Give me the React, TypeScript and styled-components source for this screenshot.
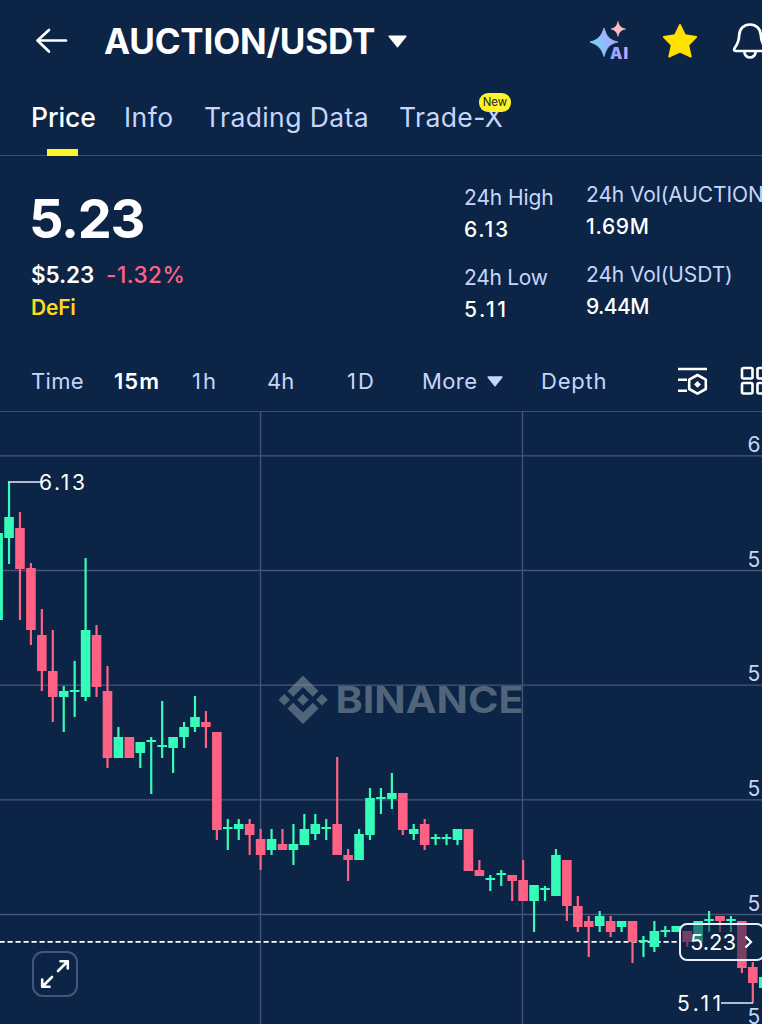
import React from 'react';
import styled, { createGlobalStyle } from 'styled-components';

type Candle = [up: 0 | 1, high: number, top: number, bottom: number, low: number];

const UP = '#35fdb9';
const DOWN = '#ff6184';
const MUTED = '#c6d6fb';

const STEP = 10.938;
const FIRST_X = -1.9;

const candles: Candle[] = [
  [1, 533, 533, 620, 620],
  [1, 482, 517, 538, 564],
  [0, 512, 528, 569, 620],
  [0, 563, 568, 630, 645],
  [0, 609, 635, 671, 691],
  [0, 630, 671, 697, 722],
  [1, 686, 691, 697, 732],
  [1, 661, 690, 692, 717],
  [1, 558, 630, 697, 701],
  [0, 625, 635, 687, 697],
  [0, 666, 691, 758, 768],
  [1, 727, 737, 758, 758],
  [0, 737, 737, 758, 758],
  [1, 742, 742, 753, 768],
  [1, 737, 740, 742, 794],
  [1, 701, 745, 747, 758],
  [1, 737, 737, 748, 773],
  [1, 722, 727, 737, 748],
  [1, 696, 717, 727, 732],
  [0, 711, 722, 727, 748],
  [0, 732, 732, 830, 840],
  [1, 819, 827, 829, 850],
  [1, 819, 824, 829, 840],
  [0, 819, 824, 835, 855],
  [0, 829, 839, 855, 870],
  [1, 829, 839, 850, 855],
  [0, 829, 844, 850, 850],
  [1, 824, 844, 850, 865],
  [1, 814, 829, 845, 845],
  [1, 814, 824, 834, 840],
  [1, 819, 827, 829, 840],
  [0, 757, 824, 855, 855],
  [0, 849, 855, 860, 881],
  [1, 829, 834, 860, 860],
  [1, 788, 798, 835, 840],
  [1, 788, 797, 799, 814],
  [1, 773, 793, 799, 809],
  [0, 793, 793, 830, 835],
  [1, 824, 829, 834, 840],
  [0, 819, 824, 845, 850],
  [1, 834, 837, 839, 845],
  [1, 834, 837, 839, 845],
  [1, 829, 829, 840, 845],
  [0, 829, 829, 871, 871],
  [0, 860, 870, 876, 876],
  [1, 875, 878, 880, 891],
  [1, 870, 873, 875, 886],
  [0, 875, 875, 881, 901],
  [0, 860, 880, 901, 901],
  [1, 885, 885, 901, 932],
  [1, 886, 888, 890, 901],
  [1, 849, 855, 896, 896],
  [0, 860, 860, 906, 921],
  [0, 896, 906, 927, 932],
  [0, 916, 921, 927, 957],
  [1, 911, 916, 926, 932],
  [0, 916, 921, 932, 937],
  [1, 921, 921, 927, 932],
  [0, 921, 921, 942, 963],
  [1, 936, 940, 942, 957],
  [1, 921, 931, 947, 952],
  [1, 926, 930, 932, 937],
  [1, 926, 926, 932, 932],
  [0, 931, 931, 942, 947],
  [1, 921, 921, 942, 942],
  [1, 911, 919, 921, 932],
  [0, 916, 916, 921, 932],
  [1, 916, 919, 921, 932],
  [0, 921, 921, 968, 973],
  [0, 962, 967, 983, 1003],
  [1, 977, 977, 988, 988],
];

const gridRows = [455.8, 570.5, 685.2, 799.8, 914.5];
const gridCols = [260.5, 522.5];

const GlobalStyle = createGlobalStyle`
  html, body {
    margin: 0;
    background: #0c2546;
    overflow: hidden;
  }
  * { box-sizing: border-box; }
`;

const Screen = styled.div`
  display: flex;
  flex-direction: column;
  width: 762px;
  height: 1024px;
  overflow: hidden;
  background: #0c2546;
  color: #fff;
  font-family: Inter, "Liberation Sans", sans-serif;
  white-space: nowrap;
`;

const Header = styled.header`
  display: flex;
  align-items: center;
  height: 82px;
  padding-left: 35px;
  flex: none;
  svg { display: block; flex: none; }
`;

const Pair = styled.h1`
  margin: 0 13px 0 36px;
  width: 271px;
  flex: none;
  font-size: 35px;
  font-weight: 700;
  letter-spacing: -0.2px;
`;

const Actions = styled.div`
  display: flex;
  align-items: center;
  flex: none;
  margin-left: 182px;
  gap: 34px;
`;

const Tabs = styled.nav`
  display: flex;
  height: 74px;
  padding-left: 31px;
  border-bottom: 1px solid #3c4f70;
  flex: none;
`;

const Tab = styled.div<{ $w: number; $ls: number; $active?: boolean }>`
  position: relative;
  width: ${p => p.$w}px;
  flex: none;
  padding-top: 19px;
  font-size: 26.5px;
  line-height: 32px;
  font-weight: ${p => (p.$active ? 500 : 400)};
  letter-spacing: ${p => p.$ls}px;
  color: ${p => (p.$active ? '#fff' : MUTED)};
`;

const Underline = styled.div`
  position: absolute;
  left: 16px;
  bottom: -1px;
  width: 31px;
  height: 7px;
  background: #fdf52a;
`;

const Badge = styled.span`
  position: absolute;
  left: 80px;
  top: 11px;
  width: 32px;
  height: 19px;
  border-radius: 9px;
  background: #fdf52a;
  color: #1b1f2b;
  font-size: 11.5px;
  line-height: 19px;
  letter-spacing: 0;
  text-align: center;
`;

const Summary = styled.section`
  display: flex;
  height: 195px;
  padding-left: 31px;
  flex: none;
`;

const Quote = styled.div`
  width: 433px;
  flex: none;
  padding-top: 30px;
`;

const LastPrice = styled.div`
  margin-left: -2px;
  font-size: 54px;
  line-height: 66px;
  font-weight: 700;
  letter-spacing: -1.3px;
`;

const Change = styled.div`
  display: flex;
  margin-top: 9px;
  font-size: 22.5px;
  line-height: 28px;
  font-weight: 600;
`;

const Fiat = styled.span`
  width: 75px;
  letter-spacing: -0.1px;
`;

const Percent = styled.span`
  color: ${DOWN};
  font-weight: 500;
  letter-spacing: 0.5px;
`;

const Category = styled.div`
  margin-top: 5px;
  font-size: 21px;
  line-height: 28px;
  font-weight: 600;
  letter-spacing: -0.2px;
  color: #ffd91c;
`;

const StatColumn = styled.div<{ $w: number; $top: number }>`
  width: ${p => p.$w}px;
  flex: none;
  padding-top: ${p => p.$top}px;
`;

const Stat = styled.div`
  height: 80px;
  font-size: 21px;
`;

const StatLabel = styled.div<{ $ls?: number }>`
  line-height: 32px;
  color: ${MUTED};
  letter-spacing: ${p => p.$ls ?? 0}px;
`;

const StatValue = styled.div<{ $ls: number }>`
  line-height: 32px;
  font-weight: 500;
  letter-spacing: ${p => p.$ls}px;
`;

const Intervals = styled.div`
  display: flex;
  align-items: center;
  height: 61px;
  padding-left: 31px;
  border-bottom: 1px solid #3c4f70;
  flex: none;
  svg { display: block; flex: none; }
`;

const Interval = styled.div<{ $w: number; $ls?: number; $active?: boolean }>`
  display: flex;
  align-items: center;
  width: ${p => p.$w}px;
  flex: none;
  gap: 10px;
  font-size: 22px;
  font-weight: ${p => (p.$active ? 600 : 400)};
  letter-spacing: ${p => p.$ls ?? 0}px;
  color: ${p => (p.$active ? '#fff' : MUTED)};
`;

const ChartArea = styled.main`
  position: relative;
  height: 612px;
  flex: none;
  > svg { display: block; }
`;

const PriceTag = styled.div`
  position: absolute;
  left: 679px;
  top: 511px;
  width: 86px;
  height: 38px;
  display: flex;
  align-items: center;
  gap: 8px;
  padding-left: 9px;
  border: 2px solid #e8eefb;
  border-radius: 8px;
  background: rgba(12, 37, 70, 0.56);
  font-size: 22px;
`;

const ExpandButton = styled.div`
  position: absolute;
  left: 32px;
  top: 539px;
  width: 46px;
  height: 46px;
  display: flex;
  align-items: center;
  justify-content: center;
  border: 2px solid #44577a;
  border-radius: 11px;
`;

const Caret: React.FC<{ width: number; height: number; color: string }> = ({ width, height, color }) => (
  <svg width={width} height={height} viewBox="0 0 18 12">
    <path d="M1.2 1h15.6L9 10.8z" fill={color} stroke={color} strokeWidth="1.6" strokeLinejoin="round" />
  </svg>
);

const AiIcon = () => (
  <svg width="39" height="42" viewBox="0 0 39 42">
    <defs>
      <linearGradient id="spark" x1="0" y1="0.8" x2="1" y2="0.3">
        <stop offset="0" stopColor="#62e6fb" />
        <stop offset="0.5" stopColor="#93bbff" />
        <stop offset="1" stopColor="#b9a0ff" />
      </linearGradient>
      <linearGradient id="small" x1="0" y1="1" x2="1" y2="0">
        <stop offset="0" stopColor="#ffaee6" />
        <stop offset="1" stopColor="#ffc4a8" />
      </linearGradient>
      <linearGradient id="ai" x1="0" y1="0" x2="1" y2="0">
        <stop offset="0" stopColor="#82a8ff" />
        <stop offset="1" stopColor="#d7a2ff" />
      </linearGradient>
    </defs>
    <path d="M15 8C17.500 16 20 20 29 22C20 24 17.500 28 15 36.500C12.500 28 9 25 1 22C9 20 12.500 16 15 8Z" fill="url(#spark)" stroke="url(#spark)" strokeWidth="0.8" strokeLinejoin="round" />
    <path d="M29 1.500C30 6 32 8 36.500 9C32 10 30 12 29 16.500C28 12 26 10 22 9C26 8 28 6 29 1.500Z" fill="url(#small)" stroke="url(#small)" strokeWidth="0.6" />
    <text x="21" y="38.700" fontSize="15.500" fontWeight="900" textLength="18" stroke="#0c2546" strokeWidth="2" paintOrder="stroke" fill="url(#ai)">AI</text>
  </svg>
);

const StarIcon = () => (
  <svg width="36" height="36" viewBox="0 0 36 36">
    <path d="M18 1.800L23 12.200L34.300 13.800L26.300 22L28.800 33.700L18 28.800L7.200 33.700L9.700 22L1.700 13.800L13 12.200Z" fill="#ffe000" stroke="#ffe000" strokeWidth="1.800" strokeLinejoin="round" />
  </svg>
);

const BellIcon = () => (
  <svg width="36" height="38" viewBox="0 0 36 38" fill="none" stroke="#fff" strokeWidth="2.700" strokeLinejoin="round">
    <path d="M18 2.500C11.500 2.500 7.500 7 7.200 13C7 19 6 21.500 3 25.500C1.500 27.800 2 29 4 29H32C34 29 34.500 27.800 33 25.500C30 21.500 29 19 28.800 13C28.500 7 24.500 2.500 18 2.500Z" />
    <path d="M12.300 30C13 34 15 35.500 18 35.500S23 34 23.700 30" />
  </svg>
);

const SettingsIcon = () => (
  <svg width="31" height="31" viewBox="0 0 31 31" fill="none" stroke="#fff" strokeWidth="2.600">
    <path d="M1 3H30M1 13.700H10M1 24.700H10" />
    <path d="M20.500 9L28.800 13.700V23L20.500 27.700L12.200 23V13.700Z" strokeLinejoin="round" />
    <path d="M20.500 15L24 18.400L20.500 21.800L17 18.400Z" fill="#fff" stroke="none" />
  </svg>
);

const LayoutIcon = () => (
  <svg width="30" height="30" viewBox="0 0 30 30" fill="none" stroke="#fff" strokeWidth="2.600">
    <rect x="2" y="2" width="10.500" height="10.500" rx="1.500" />
    <rect x="17.500" y="2" width="10.500" height="10.500" rx="1.500" />
    <rect x="2" y="17" width="10.500" height="10.500" rx="1.500" />
    <rect x="17.500" y="17" width="10.500" height="10.500" rx="1.500" />
  </svg>
);

const Chart = () => (
  <svg width="762" height="612" viewBox="0 412 762 612">
    <g stroke="#46567b" strokeWidth="1.300">
      {gridRows.map(y => <line key={y} x1="0" x2="762" y1={y} y2={y} />)}
      {gridCols.map(x => <line key={x} x1={x} x2={x} y1="412" y2="1024" />)}
    </g>

    {/* watermark */}
    <g fill="#8b98a6" opacity="0.55">
      <path d="M303 675.500L318.500 691L312.800 696.700L303 686.900L293.200 696.700L287.500 691Z" />
      <path d="M303 724L318.500 708.500L312.800 702.800L303 712.600L293.200 702.800L287.500 708.500Z" />
      <path d="M303 694L308.800 699.800L303 705.600L297.200 699.800Z" />
      <path d="M284.300 694L290.100 699.800L284.300 705.600L278.500 699.800Z" />
      <path d="M322 694L327.800 699.800L322 705.600L316.200 699.800Z" />
      <text x="335.500" y="713" fontSize="37" fontWeight="700" textLength="188" lengthAdjust="spacingAndGlyphs">BINANCE</text>
    </g>

    <line x1="0" x2="680" y1="941.800" y2="941.800" stroke="#fff" strokeWidth="1.800" strokeDasharray="5.200 2.800" strokeDashoffset="0.500" />

    {candles.map(([up, high, top, bottom, low], i) => {
      const x = FIRST_X + STEP * i;
      return (
        <g key={i} fill={up ? UP : DOWN}>
          <rect x={x - 1.1} y={high} width="2.2" height={low - high} />
          <rect x={x - 4.8} y={top} width="9.6" height={bottom - top} />
        </g>
      );
    })}

    <g stroke="#e8eefb" strokeWidth="1.500">
      <line x1="8" x2="41" y1="482" y2="482" />
      <line x1="721" x2="753" y1="1003" y2="1003" />
    </g>
    <g fill="#fff" fontSize="21">
      <text x="39" y="490" textLength="46">6.13</text>
      <text x="677" y="1011" textLength="44">5.11</text>
    </g>
    <g fill={MUTED} fontSize="21">
      <text x="747.500" y="451.500">6</text>
      <text x="747.500" y="566.500">5</text>
      <text x="747.500" y="681">5</text>
      <text x="747.500" y="796">5</text>
      <text x="747.500" y="910.500">5</text>
      <text x="747.500" y="1023.500">5</text>
    </g>
  </svg>
);

const App: React.FC = () => (
  <>
    <GlobalStyle />
    <Screen>
      <Header>
        <svg width="33" height="28" viewBox="0 0 33 28" fill="none" stroke="#fff" strokeWidth="2.700" strokeLinecap="round" strokeLinejoin="round">
          <path d="M31 13.500H2.500M14 3L2.500 13.500L14 24.500" />
        </svg>
        <Pair>AUCTION/USDT</Pair>
        <Caret width={19} height={13} color="#fff" />
        <Actions>
          <AiIcon />
          <StarIcon />
          <BellIcon />
        </Actions>
      </Header>

      <Tabs>
        <Tab $w={93} $ls={-0.1} $active>Price<Underline /></Tab>
        <Tab $w={80} $ls={0.5}>Info</Tab>
        <Tab $w={195} $ls={0.4}>Trading Data</Tab>
        <Tab $w={120} $ls={0.4}>Trade-X<Badge>New</Badge></Tab>
      </Tabs>

      <Summary>
        <Quote>
          <LastPrice>5.23</LastPrice>
          <Change>
            <Fiat>$5.23</Fiat>
            <Percent>-1.32%</Percent>
          </Change>
          <Category>DeFi</Category>
        </Quote>
        <StatColumn $w={122} $top={26}>
          <Stat>
            <StatLabel $ls={-0.1}>24h High</StatLabel>
            <StatValue $ls={1.7}>6.13</StatValue>
          </Stat>
          <Stat>
            <StatLabel $ls={-0.3}>24h Low</StatLabel>
            <StatValue $ls={2.5}>5.11</StatValue>
          </Stat>
        </StatColumn>
        <StatColumn $w={200} $top={23}>
          <Stat>
            <StatLabel $ls={-0.1}>24h Vol(AUCTION)</StatLabel>
            <StatValue $ls={0.7}>1.69M</StatValue>
          </Stat>
          <Stat>
            <StatLabel $ls={-0.1}>24h Vol(USDT)</StatLabel>
            <StatValue $ls={-0.6}>9.44M</StatValue>
          </Stat>
        </StatColumn>
      </Summary>

      <Intervals>
        <Interval $w={83} $ls={0.3}>Time</Interval>
        <Interval $w={78} $ls={1} $active>15m</Interval>
        <Interval $w={75} $ls={2}>1h</Interval>
        <Interval $w={80}>4h</Interval>
        <Interval $w={75} $ls={2}>1D</Interval>
        <Interval $w={119} $ls={0.4}>More <Caret width={16} height={11} color={MUTED} /></Interval>
        <Interval $w={136} $ls={0.8}>Depth</Interval>
        <SettingsIcon />
        <Interval $w={32} />
        <LayoutIcon />
      </Intervals>

      <ChartArea>
        <Chart />
        <PriceTag>
          5.23
          <svg width="9" height="14" viewBox="0 0 9 14" fill="none" stroke="#fff" strokeWidth="2.200">
            <path d="M1.500 1.500L7 7L1.500 12.500" />
          </svg>
        </PriceTag>
        <ExpandButton>
          <svg width="30" height="30" viewBox="0 0 30 30" fill="none" stroke="#fff" strokeWidth="2.600" strokeLinecap="round" strokeLinejoin="round">
            <path d="M18 12L27.500 2.500M20.500 2.200H27.800V9.500M12 18L2.500 27.500M2.200 20.500V27.800H9.500" />
          </svg>
        </ExpandButton>
      </ChartArea>
    </Screen>
  </>
);

export default App;
